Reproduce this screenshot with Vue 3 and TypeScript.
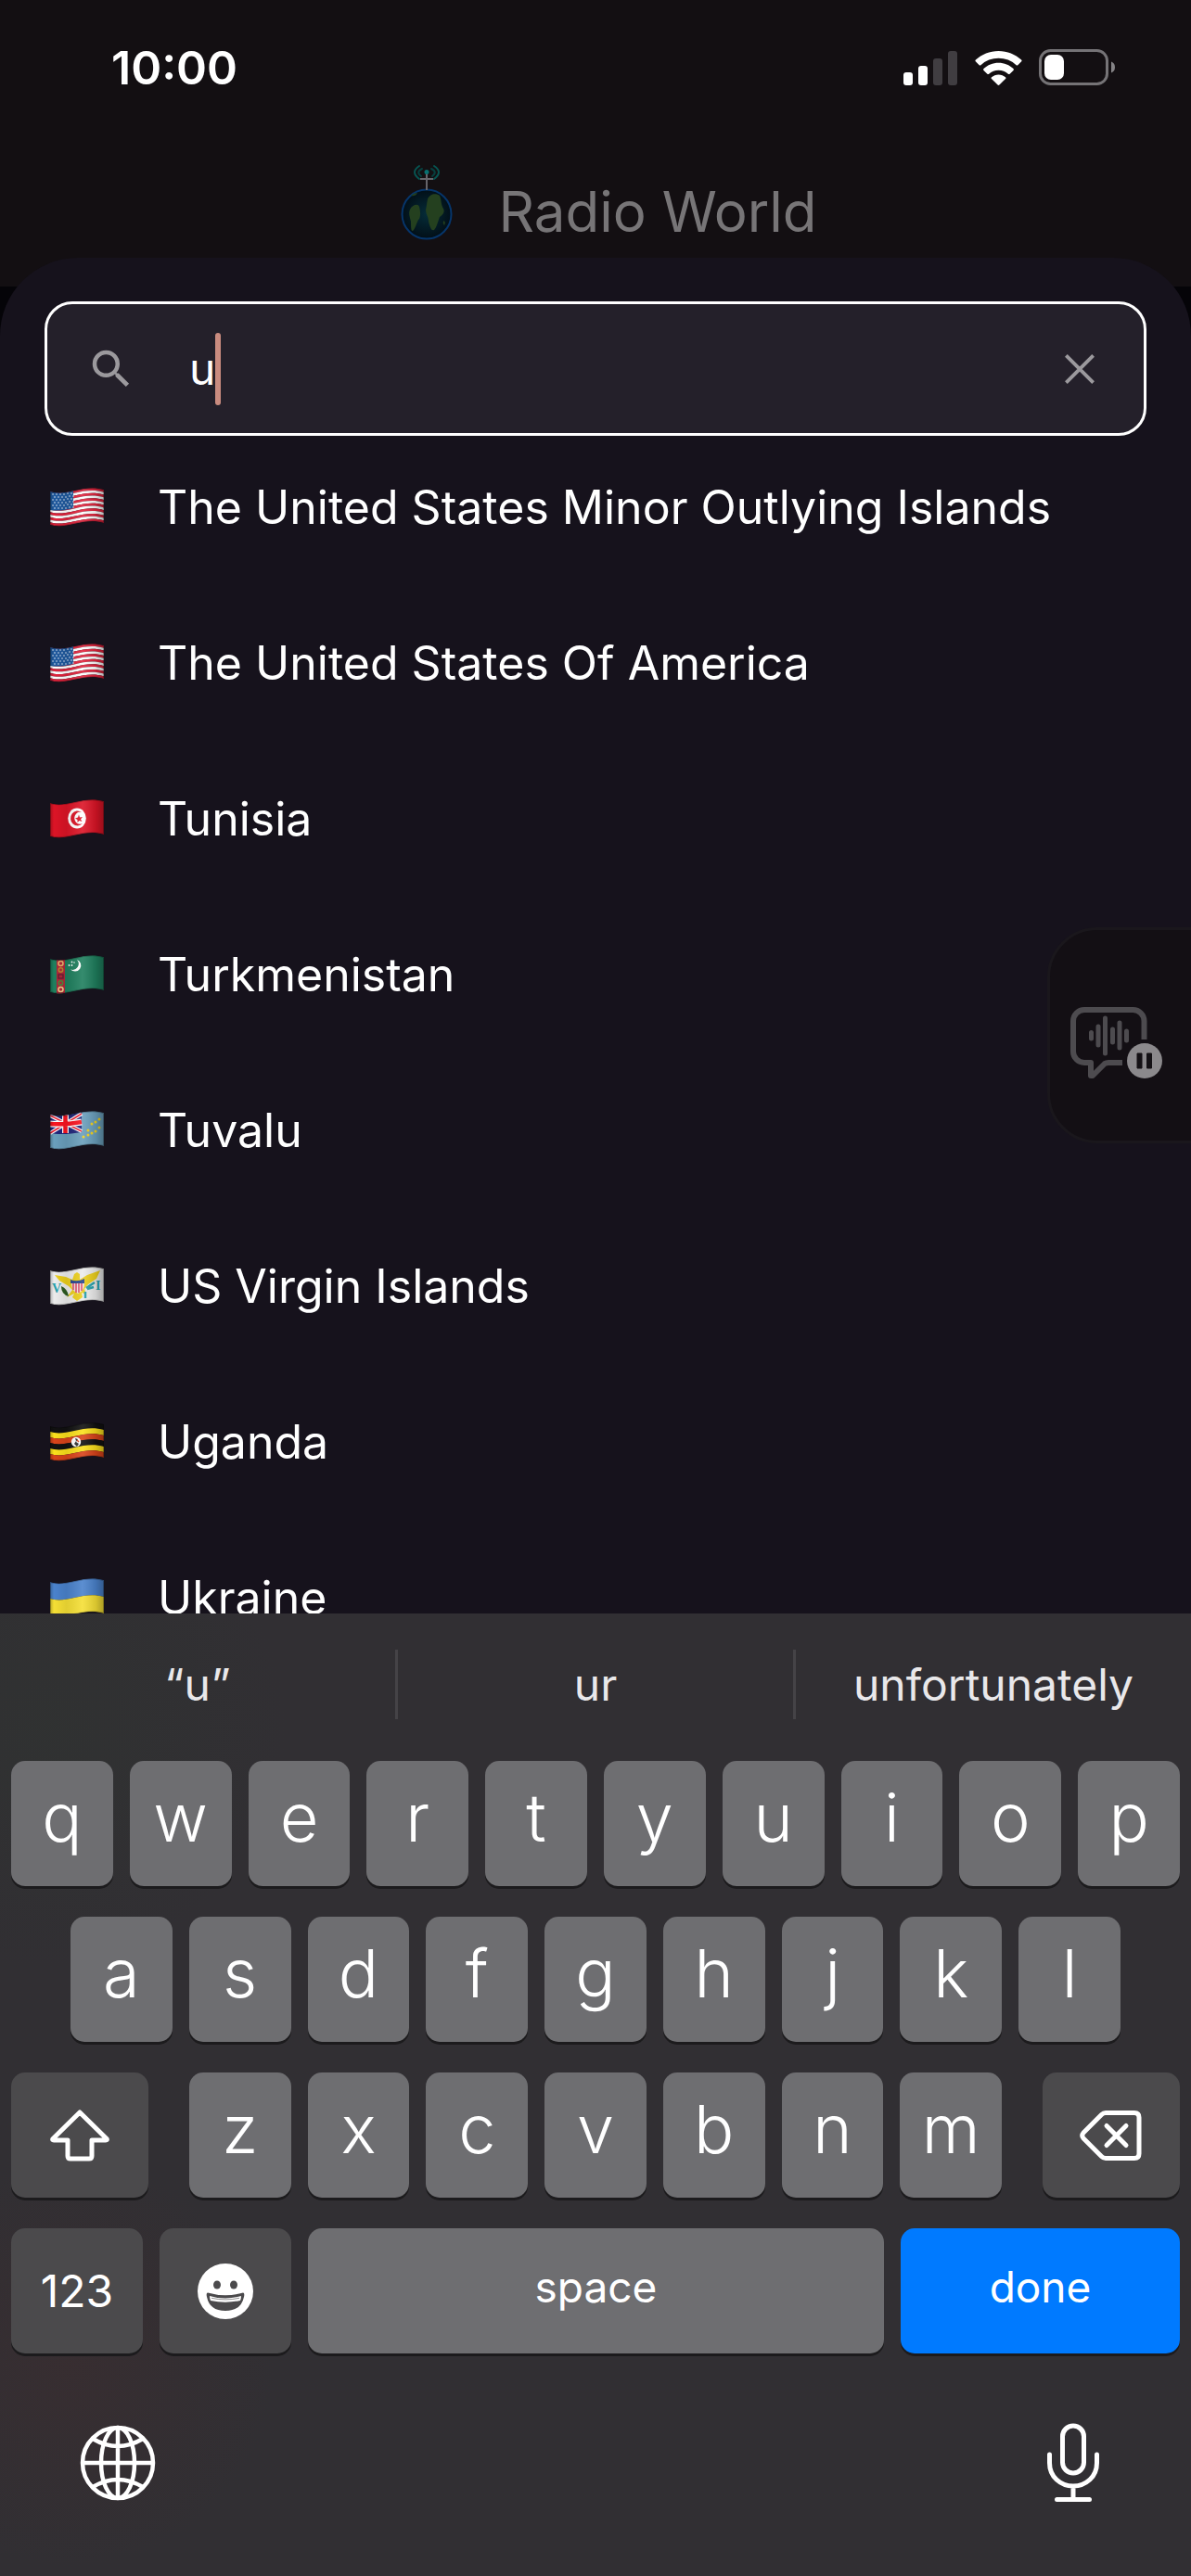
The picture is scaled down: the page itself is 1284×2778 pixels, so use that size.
<script setup lang="ts">
import { ref } from 'vue'

interface Country {
  code: string
  name: string
}

interface Band {
  from: number
  to: number
  fill: string
}

const query = ref('u')

const countries: Country[] = [
  { code: 'um', name: 'The United States Minor Outlying Islands' },
  { code: 'us', name: 'The United States Of America' },
  { code: 'tn', name: 'Tunisia' },
  { code: 'tm', name: 'Turkmenistan' },
  { code: 'tv', name: 'Tuvalu' },
  { code: 'vi', name: 'US Virgin Islands' },
  { code: 'ug', name: 'Uganda' },
  { code: 'ua', name: 'Ukraine' },
]

const suggestions = ['“u”', 'ur', 'unfortunately']
const topRow = 'qwertyuiop'.split('')
const homeRow = 'asdfghjkl'.split('')
const bottomRow = 'zxcvbnm'.split('')

/* Waving horizontal band of a flag, between two heights at the hoist */
function wave(y1: number, y2: number): string {
  return (
    `M0 ${y1}C6 ${y1 + 2} 14 ${y1 + 2} 26 ${y1 - 1}S48 ${y1 - 5} 58 ${y1 - 2}` +
    `V${y2 - 2}C48 ${y2 - 5} 38 ${y2 - 4} 26 ${y2 - 1}S6 ${y2 + 2} 0 ${y2}Z`
  )
}

const outline = wave(4, 40)

function evenBands(colors: string[]): Band[] {
  const step = 36 / colors.length
  return colors.map((fill, i) => ({ from: 4 + i * step, to: 4 + (i + 1) * step, fill }))
}

const stripes = evenBands(Array.from({ length: 13 }, (_, i) => (i % 2 ? '#ffffff' : '#e0233c')))

const flagBands: Record<string, Band[]> = {
  um: stripes,
  us: stripes,
  tn: evenBands(['#dc1426']),
  tm: evenBands(['#1f7f5e']),
  tv: evenBands(['#6a9fbc']),
  vi: evenBands(['#ececec']),
  ug: evenBands(['#111111', '#fbe01c', '#d9431a', '#111111', '#fbe01c', '#d9431a']),
  ua: evenBands(['#4a82cc', '#f5df35']),
}

const cantonDots: { x: number; y: number }[] = []
for (let r = 0; r < 6; r++) {
  for (let c = 0; c < 6; c++) {
    cantonDots.push({ x: 3 + c * 4 + (r % 2 ? 2 : 0), y: 7 + r * 3 - (c > 3 ? 1 : 0) })
  }
}

const tuvaluStars = [
  [36, 28], [41, 26], [41, 21], [45, 24], [49, 22], [45, 14], [49, 12], [53, 9], [53, 18],
]
</script>

<template>
  <main class="screen">
    <header class="app-header">
      <div class="status">
        <span class="clock">10:00</span>
        <div class="status-icons">
          <svg width="60" height="38" viewBox="0 0 60 38" fill="#fff" role="img" aria-label="Signal">
            <rect x="1" y="24" width="10" height="14" rx="3" />
            <rect x="17" y="17" width="10" height="21" rx="3" />
            <rect x="33" y="9" width="10" height="29" rx="3" fill="#403d41" />
            <rect x="49" y="1" width="10" height="37" rx="3" fill="#403d41" />
          </svg>
          <svg width="51" height="38" viewBox="0 0 51 38" fill="#fff" role="img" aria-label="Wi-Fi">
            <path d="M25.500 1C35 1 43.600 4.600 50.100 10.500Q51 11.400 50.200 12.300L46.300 16.200Q45.500 17 44.600 16.200A28 28 0 0 0 6.400 16.200Q5.500 17 4.700 16.200L.8 12.300Q0 11.400.9 10.500C7.400 4.600 16 1 25.500 1Z" />
            <path d="M25.500 13.800C31.700 13.800 37.300 16.200 41.500 20.100Q42.400 21 41.500 21.900L37.600 25.700Q36.800 26.500 35.900 25.700A15.500 15.500 0 0 0 15.100 25.700Q14.200 26.500 13.400 25.700L9.500 21.900Q8.600 21 9.500 20.100C13.700 16.200 19.300 13.800 25.500 13.800Z" />
            <path d="M25.500 26.500C28.500 26.500 31 27.600 33 29.300Q33.900 30.200 33 31.100L26.400 37.500Q25.500 38.300 24.600 37.500L18 31.100Q17.100 30.200 18 29.300C20 27.600 22.500 26.500 25.500 26.500Z" />
          </svg>
          <svg width="83" height="40" viewBox="0 0 83 40" role="img" aria-label="Battery">
            <rect x="1.500" y="1.500" width="72" height="36" rx="11" fill="none" stroke="#757376" stroke-width="3" />
            <rect x="6" y="6" width="21" height="27" rx="7" fill="#fff" />
            <path d="M78 13.500Q82 15 82 19.500T78 25.500Z" fill="#858386" />
          </svg>
        </div>
      </div>
      <div class="brand">
        <svg class="brand-logo" viewBox="0 0 56 101" aria-hidden="true">
          <defs>
            <radialGradient id="ocean">
              <stop offset="0" stop-color="#052c38" />
              <stop offset="1" stop-color="#020f18" />
            </radialGradient>
          </defs>
          <circle cx="28" cy="54" r="26.500" fill="url(#ocean)" stroke="#06356a" stroke-width="2" />
          <path d="M10 49C12 44 19 42 20 46C21 50 22 55 20 59C17 62 16 70 13 72C11 73 11 66 11 62C10 57 8 53 10 49Z" fill="#24401f" />
          <path d="M29 38C31 32 38 31 42 34C44 38 43 43 46 48C48 52 45 55 42 57C40 62 39 68 36 71C33 73 31 66 30 62C30 57 27 54 27 49C28 45 28 42 29 38Z" fill="#24401f" />
          <path d="M11 34Q14 31 18 31Q16 35 11 34ZM46 61Q49 62 47 66Q45 64 46 61Z" fill="#24401f" />
          <path d="M28 10V28M21 16H35" stroke="#66656b" stroke-width="2" />
          <circle cx="28" cy="8.500" r="2.500" fill="#077070" />
          <g fill="none" stroke="#075451" stroke-width="2" stroke-linecap="round">
            <path d="M20 2Q10 8.500 20 16M36 2Q46 8.500 36 16" />
            <path d="M23 5Q16 8.500 22 13M33 5Q40 8.500 34 13" stroke="#063f3e" />
          </g>
        </svg>
        <h1>Radio World</h1>
      </div>
    </header>

    <section class="sheet">
      <label class="search" for="country-search">
        <svg class="field-icon" viewBox="0 0 24 24" fill="currentColor" aria-hidden="true">
          <path d="M15.500 14h-.79l-.28-.27A6.470 6.470 0 0 0 16 9.500 6.500 6.500 0 1 0 9.500 16c1.610 0 3.090-.59 4.230-1.570l.27.28v.79l5 4.990L20.490 19l-4.990-5zm-6 0C7.010 14 5 11.990 5 9.500S7.010 5 9.500 5 14 7.010 14 9.500 11.990 14 9.500 14z" />
        </svg>
        <input id="country-search" v-model="query" type="text" aria-label="Search country" />
        <span class="caret"></span>
        <button class="clear" type="button" aria-label="Clear search" @click="query = ''">
          <svg class="field-icon" viewBox="0 0 24 24" fill="none" stroke="currentColor" stroke-width="1.700" aria-hidden="true">
            <path d="M5.500 5.500 18.500 18.500M18.500 5.500 5.500 18.500" />
          </svg>
        </button>
      </label>

      <ul class="countries">
        <li v-for="country in countries" :key="country.code" class="country">
          <svg class="flag" viewBox="0 0 58 43" aria-hidden="true">
            <defs>
              <clipPath :id="`shape-${country.code}`"><path :d="outline" /></clipPath>
              <linearGradient :id="`shade-${country.code}`">
                <stop offset="0" stop-color="#000" stop-opacity=".25" />
                <stop offset=".07" stop-color="#000" stop-opacity="0" />
                <stop offset=".3" stop-color="#000" stop-opacity=".08" />
                <stop offset=".6" stop-color="#fff" stop-opacity=".1" />
                <stop offset=".85" stop-color="#000" stop-opacity=".12" />
                <stop offset="1" stop-color="#000" stop-opacity=".3" />
              </linearGradient>
            </defs>
            <g :clip-path="`url(#shape-${country.code})`">
              <path v-for="(band, i) in flagBands[country.code]" :key="i" :d="wave(band.from, band.to)" :fill="band.fill" />
              <g v-if="country.code === 'us' || country.code === 'um'">
                <path d="M0 3C6 6 14 6 25 3V22C14 25 6 25 0 24Z" fill="#205a9e" />
                <circle v-for="(dot, i) in cantonDots" :key="i" :cx="dot.x" :cy="dot.y" r=".8" fill="#dfe9f5" />
              </g>
              <g v-else-if="country.code === 'tn'">
                <ellipse cx="29" cy="20.500" rx="9.800" ry="11" fill="#fff" />
                <path d="M34 14A7.500 8 0 1 0 35 26A6 6.500 0 1 1 34 14Z" fill="#dc1426" />
                <path d="M31 16.500 32 19.500 35 19 33 21.500 34.500 24 31.500 23 29.500 25 29.500 22 27 20.500 30 19.500Z" fill="#dc1426" />
              </g>
              <g v-else-if="country.code === 'tm'">
                <rect x="7" y="3" width="9" height="40" fill="#b0283a" />
                <g fill="none" stroke-width="1.500">
                  <circle cx="11.500" cy="9" r="2.500" stroke="#eab36a" />
                  <circle cx="11.500" cy="16" r="2.200" stroke="#b98a30" />
                  <path d="M9 21h5v4H9z" stroke="#6d1f35" />
                  <circle cx="11.500" cy="30" r="2.200" stroke="#4d8a3a" />
                  <circle cx="11.500" cy="37" r="2.500" stroke="#f0d28a" />
                </g>
                <path d="M29 5A6.500 6.500 0 1 1 22 15.500A6.500 6.500 0 0 0 29 5Z" fill="#fff" />
                <g fill="#fff">
                  <circle cx="20.500" cy="11" r=".9" /><circle cx="23.500" cy="7.500" r=".9" />
                  <circle cx="23.500" cy="11" r=".9" /><circle cx="26" cy="8" r=".8" />
                </g>
              </g>
              <g v-else-if="country.code === 'tv'">
                <path d="M0 3C8 6 18 5 34 1V23C22 25 10 26 0 24Z" fill="#20257a" />
                <path d="M0 5 34 22M34 3 0 24" stroke="#fff" stroke-width="4" />
                <path d="M0 5 34 22M34 3 0 24" stroke="#ee1c2e" stroke-width="1.500" />
                <path d="M16.500 2V24M0 14Q17 15 34 12" stroke="#fff" stroke-width="7" fill="none" />
                <path d="M16.500 2V24M0 14Q17 15 34 12" stroke="#fa1420" stroke-width="4.500" fill="none" />
                <circle v-for="(star, i) in tuvaluStars" :key="i" :cx="star[0]" :cy="star[1]" r="1.500" fill="#f2d21a" />
              </g>
              <g v-else-if="country.code === 'vi'">
                <path d="M5 9 17 11 24 14 26 8 29 6 32 8 32 14 40 9 54 4 50 13 41 19 37 24 39 30 34 28 35 33 29 37 24 33 26 29 18 33 24 25 20 21 10 15Z" fill="#eccf1c" />
                <path d="M22 14Q29 17 37 13V18H22Z" fill="#27468f" />
                <path d="M23 18H37Q37 26 30 29Q23 26 23 18Z" fill="#f3dfe4" />
                <path d="M25 18V25M28 18V28M31 18V28M34 18V26" stroke="#d7405e" stroke-width="1.500" />
                <path d="M12 21Q19 24 20 32Q12 30 12 21Z" fill="#2c5a21" />
                <path d="M39 23 48 17M40 24 47 22M38 27V34" stroke="#25a0ac" stroke-width="2.500" />
                <g class="flag-text">
                  <text x="2" y="28">V</text>
                  <text x="49" y="25">I</text>
                </g>
              </g>
              <g v-else-if="country.code === 'ug'">
                <circle cx="28" cy="21" r="5.200" fill="#fff" />
                <path d="M27 17 30 18 28 21 31 23 29 26 26 23 28 20Z" fill="#333" />
                <path d="M29 19 31 21" stroke="#d9431a" stroke-width="1.500" />
              </g>
              <path :d="outline" :fill="`url(#shade-${country.code})`" />
              <path :d="outline" fill="none" stroke="#000" stroke-opacity=".25" stroke-width="2" />
            </g>
          </svg>
          <span>{{ country.name }}</span>
        </li>
      </ul>

      <button class="voice-tab" type="button" aria-label="Voice paused">
        <svg width="100" height="80" viewBox="0 0 100 80" fill="none" aria-hidden="true">
          <path d="M79.500 36V16A12 12 0 0 0 67.500 4H15A12 12 0 0 0 3 16V49A12 12 0 0 0 15 61H22V75L24 75 37 62Q38.500 61 41 61H56" stroke="#4d4b4f" stroke-width="6" stroke-linejoin="round" />
          <path d="M22.500 28.500V35M30 22V42M37.500 13V51M45.500 25V39M53 18V45M60.500 27V37" stroke="#4d4b4f" stroke-width="5" stroke-linecap="round" />
          <circle cx="80" cy="59" r="19" fill="#8b898c" />
          <path d="M72 51H77V67H72ZM82.500 51H87.500V67H82.500Z" fill="#141115" stroke="#141115" stroke-linejoin="round" />
        </svg>
      </button>
    </section>

    <section class="keyboard" aria-label="Keyboard">
      <div class="suggestions">
        <button v-for="word in suggestions" :key="word" class="suggestion" type="button">{{ word }}</button>
      </div>

      <div class="rows">
        <div class="row">
          <button v-for="key in topRow" :key="key" class="key letter" type="button">{{ key }}</button>
        </div>
        <div class="row home">
          <button v-for="key in homeRow" :key="key" class="key letter" type="button">{{ key }}</button>
        </div>
        <div class="row lower">
          <button class="key dark shift" type="button" aria-label="Shift">
            <svg width="64" height="56" viewBox="0 0 64 56" fill="none" stroke="#fff" stroke-width="5" stroke-linejoin="round" aria-hidden="true">
              <path d="M32 3 61 31.500Q62 33 60 33H45V50Q45 53 42 53H22Q19 53 19 50V33H4Q2 33 3 31.500Z" />
            </svg>
          </button>
          <div class="row letters">
            <button v-for="key in bottomRow" :key="key" class="key letter" type="button">{{ key }}</button>
          </div>
          <button class="key dark shift" type="button" aria-label="Delete">
            <svg width="68" height="56" viewBox="0 0 68 56" fill="none" stroke="#fff" stroke-width="5" stroke-linejoin="round" stroke-linecap="round" aria-hidden="true">
              <path d="M28 3.500H59Q64 3.500 64 8.500V47.500Q64 52.500 59 52.500H28Q25.500 52.500 23.500 50.500L4 31Q1.500 28 4 25L23.500 5.500Q25.500 3.500 28 3.500Z" />
              <path d="M29 17.500 50 38.500M50 17.500 29 38.500" />
            </svg>
          </button>
        </div>
        <div class="row">
          <button class="key dark mode" type="button">123</button>
          <button class="key dark mode" type="button" aria-label="Emoji">
            <svg width="60" height="60" viewBox="0 0 60 60" aria-hidden="true">
              <circle cx="30" cy="30" r="30" fill="#fff" />
              <ellipse cx="21" cy="23" rx="4" ry="4.500" fill="#4b4a4c" />
              <ellipse cx="39" cy="23" rx="4" ry="4.500" fill="#4b4a4c" />
              <path d="M11 31.500Q30 37 49 31.500Q51 31.500 50 36Q47 51 30 51T10 36Q9 31.500 11 31.500Z" fill="#4b4a4c" />
              <path d="M13 35Q30 40 47 35Q47 37.500 46 40Q30 43.500 14 40Q13 37.500 13 35Z" fill="#fff" />
              <path d="M15 37.300Q30 40.500 45 37.300" stroke="#4b4a4c" stroke-width=".6" fill="none" />
            </svg>
          </button>
          <button class="key word space" type="button">space</button>
          <button class="key word done" type="button">done</button>
        </div>
      </div>

      <div class="tray">
        <button class="tray-button" type="button" aria-label="Next keyboard">
          <svg width="82" height="82" viewBox="0 0 82 82" fill="none" stroke="#fff" stroke-width="4.500" aria-hidden="true">
            <circle cx="41" cy="41" r="38" />
            <ellipse cx="41" cy="41" rx="18" ry="38" />
            <path d="M41 3V79M3 41H79M14 15Q41 31 68 15M14 67Q41 51 68 67" />
          </svg>
        </button>
        <button class="tray-button" type="button" aria-label="Dictate">
          <svg width="58" height="86" viewBox="0 0 58 86" fill="none" stroke="#fff" stroke-width="5" stroke-linecap="round" aria-hidden="true">
            <rect x="17.500" y="3" width="23" height="51" rx="11.500" />
            <path d="M3.500 34V43Q3.500 54 11 61T29 68T47 61T54.500 43V34M29 68V82M11.500 82.500H46.500" />
          </svg>
        </button>
      </div>
    </section>
  </main>
</template>

<style>
body {
  background: #050408;
}
</style>

<style scoped>
.screen {
  display: flex;
  flex-direction: column;
  height: 100vh;
  overflow: hidden;
  background: #050408;
  color: #fff;
  font-family: Inter, "Noto Sans", sans-serif;
}

button {
  margin: 0;
  padding: 0;
  border: 0;
  background: none;
  color: inherit;
  font: inherit;
}

svg {
  display: block;
  flex: none;
}

.app-header {
  flex: none;
  background: #130f12;
}

.status {
  display: flex;
  align-items: center;
  justify-content: space-between;
  height: 146px;
  padding: 0 81px 0 120px;
}

.clock {
  font-size: 50px;
  font-weight: 600;
}

.status-icons {
  display: flex;
  align-items: center;
  gap: 18px;
}

.brand {
  display: flex;
  align-items: center;
  justify-content: center;
  gap: 50px;
  height: 163px;
  padding-left: 28px;
}

.brand-logo {
  width: 56px;
  height: 101px;
}

h1 {
  margin: 0;
  color: #777577;
  font-size: 60px;
  font-weight: 400;
  line-height: 80px;
}

.sheet {
  position: relative;
  display: flex;
  flex: 1;
  flex-direction: column;
  min-height: 0;
  margin-top: -31px;
  padding: 47px 48px 0;
  overflow: hidden;
  border-radius: 84px 84px 0 0;
  background: #16121c;
}

.search {
  display: flex;
  flex: none;
  align-items: center;
  height: 145px;
  box-sizing: border-box;
  padding: 0 42px;
  border: 3px solid #fff;
  border-radius: 30px;
  background: #24202a;
}

.field-icon {
  width: 54px;
  height: 54px;
  color: #9b999d;
}

.search input {
  field-sizing: content;
  min-width: 0;
  margin: 0 0 0 57px;
  padding: 0;
  border: 0;
  outline: 0;
  background: none;
  color: #fff;
  caret-color: transparent;
  font: 400 48px/60px Inter, "Noto Sans", sans-serif;
}

.caret {
  width: 6px;
  height: 78px;
  border-radius: 3px;
  background: #c98b7f;
}

.clear {
  margin-left: auto;
}

.countries {
  display: flex;
  flex-direction: column;
  gap: 108px;
  margin: 47px 0 0;
  padding: 0 6px;
  list-style: none;
}

.country {
  display: flex;
  flex: none;
  align-items: center;
  gap: 58px;
  height: 60px;
  font-size: 50px;
  line-height: 60px;
  white-space: nowrap;
}

.flag {
  width: 58px;
  height: 43px;
}

.flag-text {
  fill: #25a0ac;
  font: 700 14px "Liberation Serif", serif;
}

.voice-tab {
  position: absolute;
  top: 722px;
  right: -3px;
  display: flex;
  align-items: center;
  width: 158px;
  height: 233px;
  padding: 16px 0 0 22px;
  border: 3px solid #1a171c;
  border-radius: 54px 0 0 54px;
  background: #130f14;
}

.keyboard {
  flex: none;
  background:
    radial-gradient(circle at 6% 78%, rgba(80, 40, 40, 0.2), transparent 220px),
    radial-gradient(circle at 4% 12%, rgba(44, 60, 44, 0.2), transparent 260px),
    #312f33;
}

.suggestions {
  display: flex;
  align-items: center;
  height: 159px;
  box-sizing: border-box;
  padding-bottom: 6px;
}

.suggestion {
  flex: 1 1 0;
  min-width: 0;
  height: 75px;
  color: #e9e8ea;
  font-size: 48px;
}

.suggestion + .suggestion {
  border-left: 3px solid #454347;
}

.rows {
  display: flex;
  flex-direction: column;
  gap: 33px;
  padding: 0 12px;
}

.row {
  display: flex;
  gap: 18px;
}

.row.home {
  padding: 0 64px;
}

.row.lower {
  gap: 44px;
}

.row.letters {
  flex: 876 1 0;
  gap: 18px;
}

.key {
  display: flex;
  flex: 1 1 0;
  align-items: center;
  justify-content: center;
  min-width: 0;
  height: 135px;
  border-radius: 15px;
  background: #6e6e71;
  box-shadow: 0 3px 0 #1c1b1d;
  font-size: 48px;
}

.letter {
  padding-bottom: 14px;
  font-size: 72px;
  font-weight: 350;
}

.dark {
  background: #4b4a4c;
}

.shift {
  flex: 148 1 0;
}

.mode {
  flex: 142 1 0;
}

.word {
  padding-bottom: 10px;
  font-size: 46px;
}

.space {
  flex: 621 1 0;
}

.done {
  flex: 301 1 0;
  background: #007aff;
}

.tray {
  display: flex;
  align-items: center;
  justify-content: space-between;
  height: 240px;
  box-sizing: border-box;
  padding: 0 98px 4px 86px;
}
</style>
